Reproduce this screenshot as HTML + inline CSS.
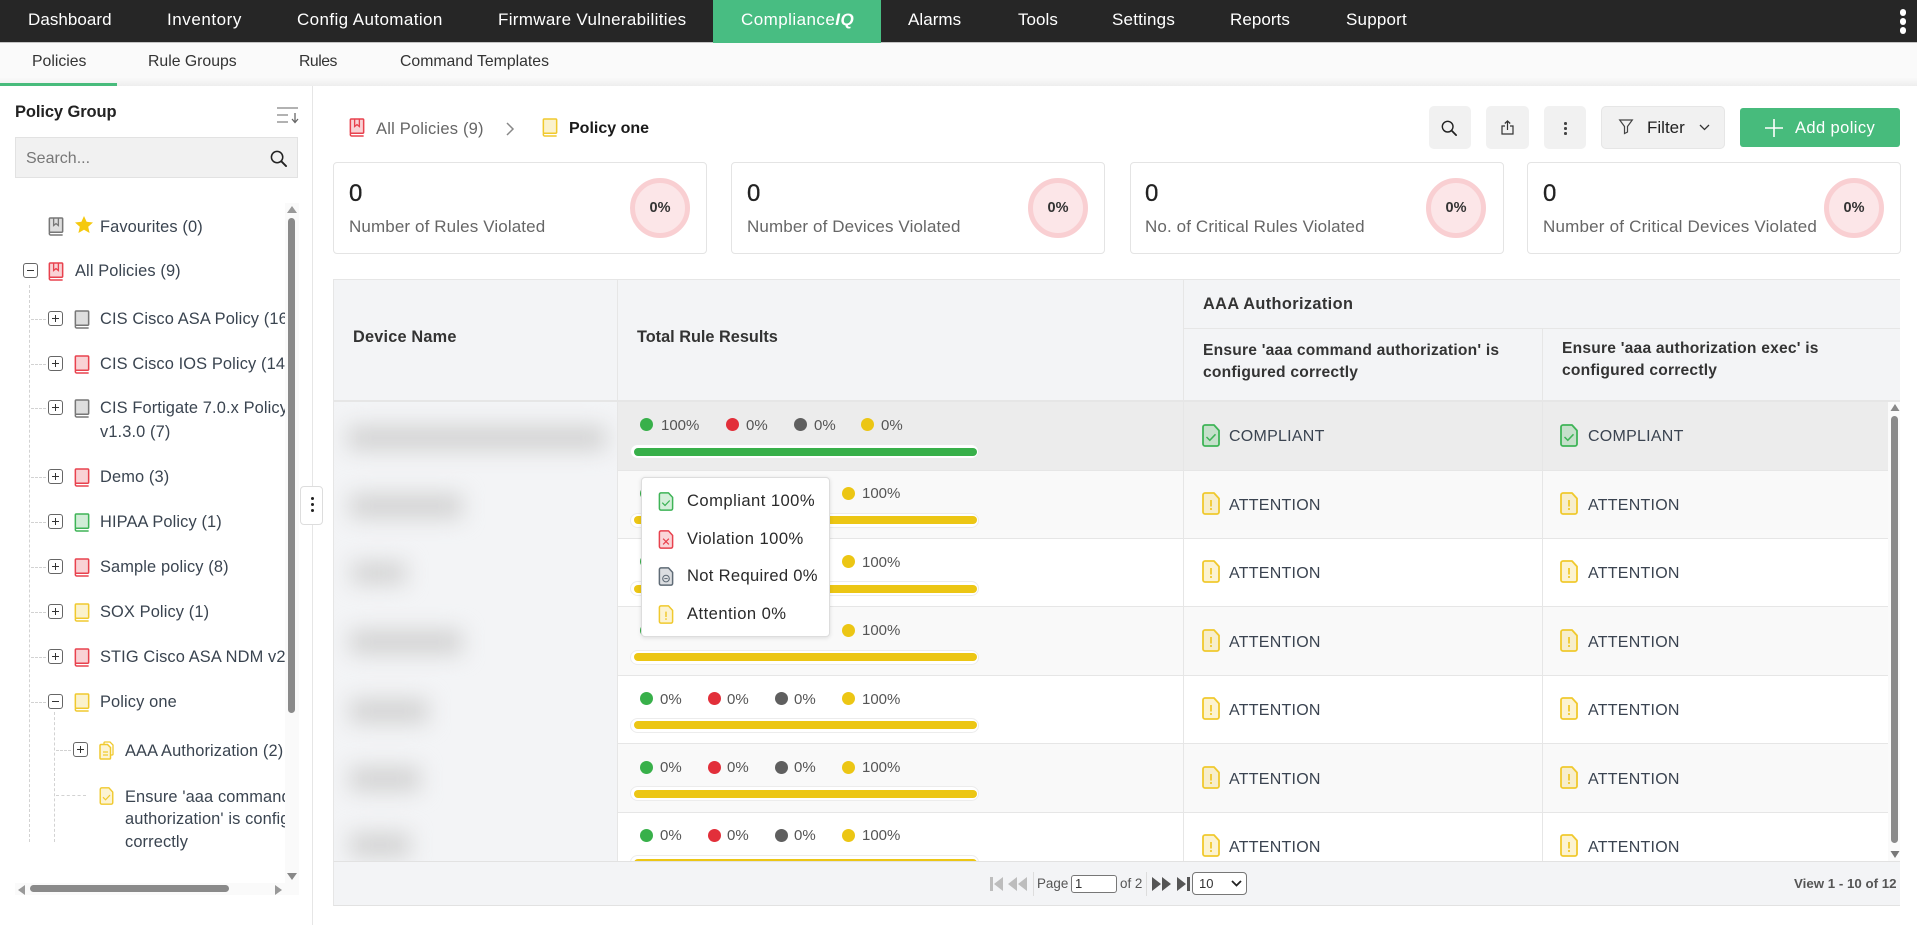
<!DOCTYPE html>
<html lang="en"><head><meta charset="utf-8"><title>Compliance IQ</title>
<style>
html,body{margin:0;padding:0;background:#fff}
body{width:1917px;height:925px;overflow:hidden;position:relative;font-family:"Liberation Sans",sans-serif;color:#333}
.a{position:absolute}
.t{position:absolute;white-space:nowrap;line-height:20px;height:20px}
svg.i{position:absolute;overflow:visible}
.nav{font-size:17px;color:#fff;letter-spacing:.05px}
.sub{font-size:15.8px;color:#333}
.tree{font-size:16.4px;color:#3a4450;letter-spacing:.12px}
.lbl{font-size:17px;color:#666;letter-spacing:.12px}
.num{font-size:24px;color:#222;line-height:30px;height:30px;-webkit-text-stroke:.3px #222}
.ring{position:absolute;width:50px;height:50px;border:5px solid #f9cfd2;background:#fce6e8;border-radius:50%;top:178px;text-align:center;line-height:50px;font-size:14.5px;font-weight:bold;color:#333}
.card{position:absolute;top:162px;height:90px;width:372px;border:1px solid #e4e4e4;border-radius:4px;background:#fff}
.th{font-size:16.3px;font-weight:bold;color:#333}
.th2{font-size:15.6px;font-weight:bold;color:#333;letter-spacing:.22px}
.dot{position:absolute;width:13px;height:13px;border-radius:50%}
.g{background:#38b04a}.r{background:#e22f3a}.k{background:#5f5f5f}.y{background:#ecc614}
.p{font-size:15px;color:#555}
.st{font-size:16px;color:#3a4350;letter-spacing:.25px}
.track{position:absolute;left:630px;width:349px;height:15px;background:#fff;border:1px solid #ececec;box-sizing:border-box;border-radius:8px}
.fill{position:absolute;left:634px;width:343px;height:8px;border-radius:4px}
.b{position:absolute;background:#d2d2d2;filter:blur(11px)}
.btn{position:absolute;top:106px;height:43px;background:#f1f1f1;border-radius:5px}
.pop{font-size:16.6px;color:#2a2a2a;letter-spacing:.45px}
.f{font-size:13.4px;color:#555}
.line{position:absolute;background:#e6e6e6}
.dh{position:absolute;height:0;border-top:1px dashed #d2d2d2}
.dv{position:absolute;width:0;border-left:1px dashed #d2d2d2}
.box{position:absolute;width:13px;height:13px;border:1px solid #666;border-radius:3px;background:#fff;box-sizing:content-box}
.box:before{content:"";position:absolute;left:3px;right:3px;top:5.75px;height:1.5px;background:#333}
.box.pl:after{content:"";position:absolute;top:3px;bottom:3px;left:5.75px;width:1.5px;background:#333}
</style></head><body>

<svg width="0" height="0" style="position:absolute">
<defs>
<symbol id="book" viewBox="0 0 16 20" overflow="visible"><rect x="1" y="1" width="14" height="15" rx="1" fill="currentColor" fill-opacity=".24" stroke="currentColor" stroke-width="1.6"/><path d="M1 16v1.500A1.500 1.500 0 0 0 2.500 19H15" fill="none" stroke="currentColor" stroke-width="1.6"/></symbol>
<symbol id="bookm" viewBox="0 0 16 20" overflow="visible"><rect x="1" y="1" width="14" height="15" rx="1" fill="currentColor" fill-opacity=".24" stroke="currentColor" stroke-width="1.6"/><path d="M1 16v1.500A1.500 1.500 0 0 0 2.500 19H15" fill="none" stroke="currentColor" stroke-width="1.6"/><path d="M5.500 1v8l2.500-2 2.500 2V1" fill="none" stroke="currentColor" stroke-width="1.4"/></symbol>
<symbol id="doc" viewBox="0 0 18 23" overflow="visible"><path d="M3 1h9l5 5.500V20a2 2 0 0 1-2 2H3a2 2 0 0 1-2-2V3a2 2 0 0 1 2-2z" fill="currentColor" fill-opacity=".22" stroke="currentColor" stroke-width="1.8" stroke-linejoin="round"/></symbol>
<symbol id="dchk" viewBox="0 0 18 23" overflow="visible"><use href="#doc" width="18" height="23"/><path d="M4.500 13l3.300 3.300 5.700-6" fill="none" stroke="currentColor" stroke-width="1.500"/></symbol>
<symbol id="dx" viewBox="0 0 18 23" overflow="visible"><use href="#doc" width="18" height="23"/><path d="M5.500 10.500l7 7m0-7l-7 7" fill="none" stroke="currentColor" stroke-width="1.500"/></symbol>
<symbol id="dmin" viewBox="0 0 18 23" overflow="visible"><use href="#doc" width="18" height="23"/><circle cx="9" cy="14" r="4" fill="none" stroke="currentColor" stroke-width="1.300"/><path d="M7 14h4" stroke="currentColor" stroke-width="1.200"/></symbol>
<symbol id="dex" viewBox="0 0 18 23" overflow="visible"><use href="#doc" width="18" height="23"/><path d="M9 8v6.500M9 16v2" fill="none" stroke="currentColor" stroke-width="1.800"/></symbol>
<symbol id="find" viewBox="0 0 18 18" overflow="visible"><circle cx="7.500" cy="7.500" r="6" fill="none" stroke="currentColor" stroke-width="1.600"/><path d="M12 12l5 5" stroke="currentColor" stroke-width="2" stroke-linecap="round"/></symbol>
</defs>
</svg>

<!-- top nav -->
<div class="a" style="left:0;top:0;width:1917px;height:42px;background:#262626"></div>
<div class="a" style="left:0;top:42px;width:1917px;height:1px;background:#c4c4c4"></div>
<div class="a" style="left:713px;top:0;width:168px;height:43px;background:#48bd82"></div>
<div class="t nav" style="left:28px;top:10px">Dashboard</div>
<div class="t nav" style="left:167px;top:10px;letter-spacing:.55px">Inventory</div>
<div class="t nav" style="left:297px;top:10px;letter-spacing:.4px">Config Automation</div>
<div class="t nav" style="left:498px;top:10px;letter-spacing:.32px">Firmware Vulnerabilities</div>
<div class="t nav" style="left:741px;top:10px;letter-spacing:.45px">Compliance<b><i>IQ</i></b></div>
<div class="t nav" style="left:908px;top:10px">Alarms</div>
<div class="t nav" style="left:1018px;top:10px">Tools</div>
<div class="t nav" style="left:1112px;top:10px;letter-spacing:.2px">Settings</div>
<div class="t nav" style="left:1230px;top:10px">Reports</div>
<div class="t nav" style="left:1346px;top:10px;letter-spacing:.2px">Support</div>
<div class="a" style="left:1900px;top:9px;width:6px;height:7px;border-radius:3px;background:#fff"></div>
<div class="a" style="left:1900px;top:18px;width:6px;height:7px;border-radius:3px;background:#fff"></div>
<div class="a" style="left:1900px;top:27px;width:6px;height:7px;border-radius:3px;background:#fff"></div>

<!-- sub nav -->
<div class="a" style="left:0;top:43px;width:1917px;height:43px;background:linear-gradient(#fafafa 80%,#eeeeee)"></div>
<div class="a" style="left:0;top:83px;width:117px;height:3px;background:#48bb7c"></div>
<div class="t sub" style="left:32px;top:52px">Policies</div>
<div class="t sub" style="left:148px;top:52px">Rule Groups</div>
<div class="t sub" style="left:299px;top:52px;letter-spacing:-.5px">Rules</div>
<div class="t sub" style="left:400px;top:52px">Command Templates</div>

<!-- sidebar -->
<div class="line" style="left:312px;top:86px;width:1px;height:839px"></div>
<div class="t" style="left:15px;top:102px;font-size:16.500px;font-weight:bold;color:#222;letter-spacing:-.1px">Policy Group</div>
<svg class="i" style="left:277px;top:107px" width="22" height="16" viewBox="0 0 22 16"><path d="M0 1h21M0 8h11M0 15h11" stroke="#999" stroke-width="1.400" fill="none"/><path d="M18 6v9M15 12l3 3.500 3-3.500" stroke="#666" stroke-width="1.300" fill="none"/></svg>
<div class="a" style="left:15px;top:137px;width:283px;height:41px;box-sizing:border-box;background:#f1f1f1;border:1px solid #e2e2e2"></div>
<div class="t" style="left:26px;top:149px;font-size:16px;color:#777">Search...</div>
<svg class="i" style="left:270px;top:150px;color:#222" width="17" height="17"><use href="#find" width="17" height="17"/></svg>

<div class="a" style="left:285px;top:203px;width:14px;height:692px;background:#fafafa"></div>
<div class="a" style="left:288px;top:218px;width:7px;height:495px;background:#8a8a8a;border-radius:4px"></div>
<svg class="i" style="left:286px;top:205px" width="12" height="9"><path d="M6 1l5 7H1z" fill="#999"/></svg>
<svg class="i" style="left:286px;top:872px" width="12" height="9"><path d="M6 8l5-7H1z" fill="#888"/></svg>
<div class="a" style="left:15px;top:883px;width:283px;height:12px;background:#fafafa"></div>
<div class="a" style="left:30px;top:885px;width:199px;height:7px;background:#8a8a8a;border-radius:4px"></div>
<svg class="i" style="left:17px;top:885px" width="9" height="10"><path d="M1 5l7-5v10z" fill="#999"/></svg>
<svg class="i" style="left:274px;top:885px" width="9" height="10"><path d="M8 5L1 0v10z" fill="#999"/></svg>

<div class="dv" style="left:29px;top:285px;height:557px"></div>
<div class="dv" style="left:54px;top:712px;height:130px"></div>
<div class="dh" style="left:31px;top:319px;width:15px"></div>
<div class="dh" style="left:31px;top:364px;width:15px"></div>
<div class="dh" style="left:31px;top:408px;width:15px"></div>
<div class="dh" style="left:31px;top:477px;width:15px"></div>
<div class="dh" style="left:31px;top:522px;width:15px"></div>
<div class="dh" style="left:31px;top:567px;width:15px"></div>
<div class="dh" style="left:31px;top:612px;width:15px"></div>
<div class="dh" style="left:31px;top:657px;width:15px"></div>
<div class="dh" style="left:31px;top:702px;width:15px"></div>
<div class="dh" style="left:56px;top:750px;width:15px"></div>
<div class="dh" style="left:56px;top:795px;width:30px"></div>

<svg class="i" style="left:48px;top:217px;color:#777" width="16" height="19"><use href="#bookm" width="16" height="19"/></svg>
<svg class="i" style="left:75px;top:216px" width="18" height="17" viewBox="0 0 18 17"><path d="M9 0l2.600 5.800 6.400.700-4.800 4.200 1.400 6.300L9 13.700 3.400 17l1.400-6.300L0 6.500l6.400-.700z" fill="#f5c90f"/></svg>
<div class="t tree" style="left:100px;top:217px">Favourites (0)</div>

<div class="box" style="left:23px;top:263px"></div>
<svg class="i" style="left:48px;top:262px;color:#e8424e" width="16" height="19"><use href="#bookm" width="16" height="19"/></svg>
<div class="t tree" style="left:75px;top:261px">All Policies (9)</div>

<div class="a" style="left:0;top:300px;width:285px;height:560px;overflow:hidden">
<div class="box pl" style="left:48px;top:11px"></div>
<svg class="i" style="left:74px;top:10px;color:#777" width="16" height="19"><use href="#book" width="16" height="19"/></svg>
<div class="t tree" style="left:100px;top:9px">CIS Cisco ASA Policy (16)</div>
<div class="box pl" style="left:48px;top:56px"></div>
<svg class="i" style="left:74px;top:55px;color:#e8424e" width="16" height="19"><use href="#book" width="16" height="19"/></svg>
<div class="t tree" style="left:100px;top:54px">CIS Cisco IOS Policy (14)</div>
<div class="box pl" style="left:48px;top:100px"></div>
<svg class="i" style="left:74px;top:99px;color:#777" width="16" height="19"><use href="#book" width="16" height="19"/></svg>
<div class="t tree" style="left:100px;top:98px">CIS Fortigate 7.0.x Policy</div>
<div class="t tree" style="left:100px;top:122px">v1.3.0 (7)</div>
<div class="box pl" style="left:48px;top:169px"></div>
<svg class="i" style="left:74px;top:168px;color:#e8424e" width="16" height="19"><use href="#book" width="16" height="19"/></svg>
<div class="t tree" style="left:100px;top:167px">Demo (3)</div>
<div class="box pl" style="left:48px;top:214px"></div>
<svg class="i" style="left:74px;top:213px;color:#3fb457" width="16" height="19"><use href="#book" width="16" height="19"/></svg>
<div class="t tree" style="left:100px;top:212px">HIPAA Policy (1)</div>
<div class="box pl" style="left:48px;top:259px"></div>
<svg class="i" style="left:74px;top:258px;color:#e8424e" width="16" height="19"><use href="#book" width="16" height="19"/></svg>
<div class="t tree" style="left:100px;top:257px">Sample policy (8)</div>
<div class="box pl" style="left:48px;top:304px"></div>
<svg class="i" style="left:74px;top:303px;color:#f0c92e" width="16" height="19"><use href="#book" width="16" height="19"/></svg>
<div class="t tree" style="left:100px;top:302px">SOX Policy (1)</div>
<div class="box pl" style="left:48px;top:349px"></div>
<svg class="i" style="left:74px;top:348px;color:#e8424e" width="16" height="19"><use href="#book" width="16" height="19"/></svg>
<div class="t tree" style="left:100px;top:347px">STIG Cisco ASA NDM v2R1</div>
<div class="box" style="left:48px;top:394px"></div>
<svg class="i" style="left:74px;top:393px;color:#f0c92e" width="16" height="19"><use href="#book" width="16" height="19"/></svg>
<div class="t tree" style="left:100px;top:392px">Policy one</div>
<div class="box pl" style="left:73px;top:442px"></div>
<svg class="i" style="left:99px;top:441px;color:#f0c92e" width="15" height="19" viewBox="0 0 15 19"><path d="M5 3V2a1 1 0 0 1 1-1h5l3 3v9a1 1 0 0 1-1 1h-1" fill="none" stroke="currentColor" stroke-width="1.300"/><path d="M2 3.500h6.500l3 3V17a1 1 0 0 1-1 1H2a1 1 0 0 1-1-1V4.500a1 1 0 0 1 1-1z" fill="currentColor" fill-opacity=".2" stroke="currentColor" stroke-width="1.500"/><path d="M4 11h5M4 14h5" stroke="currentColor" stroke-width="1.200"/></svg>
<div class="t tree" style="left:125px;top:441px">AAA Authorization (2)</div>
<svg class="i" style="left:99px;top:487px;color:#f0c92e" width="15" height="18"><use href="#dchk" width="15" height="18"/></svg>
<div class="t tree" style="left:125px;top:487px">Ensure 'aaa command</div>
<div class="t tree" style="left:125px;top:509px">authorization' is configured</div>
<div class="t tree" style="left:125px;top:532px">correctly</div>
</div>

<div class="a" style="left:300px;top:486px;width:23px;height:39px;box-sizing:border-box;background:#fff;border:1px solid #ddd;border-radius:4px"></div>
<div class="a" style="left:311px;top:497px;width:3px;height:3px;border-radius:50%;background:#222"></div>
<div class="a" style="left:311px;top:503px;width:3px;height:3px;border-radius:50%;background:#222"></div>
<div class="a" style="left:311px;top:509px;width:3px;height:3px;border-radius:50%;background:#222"></div>

<!-- breadcrumb -->
<svg class="i" style="left:349px;top:118px;color:#e8424e" width="16" height="19"><use href="#bookm" width="16" height="19"/></svg>
<div class="t" style="left:376px;top:119px;font-size:16.500px;color:#666;letter-spacing:.2px">All Policies (9)</div>
<svg class="i" style="left:506px;top:122px" width="9" height="14"><path d="M1 1l6 6-6 6" fill="none" stroke="#888" stroke-width="1.500"/></svg>
<svg class="i" style="left:542px;top:118px;color:#f0c92e" width="16" height="19"><use href="#book" width="16" height="19"/></svg>
<div class="t" style="left:569px;top:119px;font-size:16px;font-weight:bold;color:#1a1a1a">Policy one</div>

<!-- toolbar -->
<div class="btn" style="left:1429px;width:42px"></div>
<svg class="i" style="left:1441px;top:120px;color:#222" width="16" height="16"><use href="#find" width="16" height="16"/></svg>
<div class="btn" style="left:1486px;width:43px"></div>
<svg class="i" style="left:1501px;top:120px" width="13" height="15" viewBox="0 0 13 15"><path d="M4 6H1v8h11V6H9M6.500 10V1M3.800 3.500L6.500 1l2.700 2.500" fill="none" stroke="#333" stroke-width="1.200"/></svg>
<div class="btn" style="left:1544px;width:42px"></div>
<div class="a" style="left:1564px;top:122px;width:2.5px;height:2.500px;border-radius:50%;background:#444"></div>
<div class="a" style="left:1564px;top:127px;width:2.5px;height:2.500px;border-radius:50%;background:#444"></div>
<div class="a" style="left:1564px;top:132px;width:2.5px;height:2.500px;border-radius:50%;background:#444"></div>
<div class="btn" style="left:1601px;width:124px;box-shadow:0 0 0 1px #e6e6e6 inset"></div>
<svg class="i" style="left:1619px;top:119px" width="14" height="15" viewBox="0 0 14 15"><path d="M.700 1h12.600L8.500 7.500V13L5.500 14.500v-7z" fill="none" stroke="#444" stroke-width="1.200"/></svg>
<div class="t" style="left:1647px;top:118px;font-size:17px;color:#222">Filter</div>
<svg class="i" style="left:1699px;top:124px" width="11" height="7"><path d="M1 1l4.500 4.500L10 1" fill="none" stroke="#333" stroke-width="1.300"/></svg>
<div class="a" style="left:1740px;top:108px;width:160px;height:39px;background:#47bb7c;border-radius:3px"></div>
<svg class="i" style="left:1765px;top:119px" width="18" height="18"><path d="M9 0v18M0 9h18" stroke="#fff" stroke-width="1.600"/></svg>
<div class="t" style="left:1795px;top:118px;font-size:16.500px;color:#fff;letter-spacing:.4px">Add policy</div>

<!-- cards -->
<div class="card" style="left:333px"></div>
<div class="card" style="left:731px"></div>
<div class="card" style="left:1130px"></div>
<div class="card" style="left:1527px"></div>
<div class="t num" style="left:349px;top:179px">0</div>
<div class="t num" style="left:747px;top:179px">0</div>
<div class="t num" style="left:1145px;top:179px">0</div>
<div class="t num" style="left:1543px;top:179px">0</div>
<div class="t lbl" style="left:349px;top:217px">Number of Rules Violated</div>
<div class="t lbl" style="left:747px;top:217px">Number of Devices Violated</div>
<div class="t lbl" style="left:1145px;top:217px">No. of Critical Rules Violated</div>
<div class="t lbl" style="left:1543px;top:217px;letter-spacing:.2px">Number of Critical Devices Violated</div>
<div class="ring" style="left:630px">0%</div>
<div class="ring" style="left:1028px">0%</div>
<div class="ring" style="left:1426px">0%</div>
<div class="ring" style="left:1824px">0%</div>

<!-- table header -->
<div class="a" style="left:333px;top:279px;width:1567px;height:122px;background:#f3f4f6"></div>
<div class="line" style="left:333px;top:279px;width:1567px;height:1px"></div>
<div class="line" style="left:333px;top:279px;width:1px;height:626px"></div>
<div class="line" style="left:1183px;top:328px;width:717px;height:1px"></div>
<div class="line" style="left:333px;top:400px;width:1567px;height:2px"></div>
<div class="t th" style="left:353px;top:327px;letter-spacing:.2px">Device Name</div>
<div class="t th" style="left:637px;top:327px">Total Rule Results</div>
<div class="t th" style="left:1203px;top:294px;letter-spacing:.4px">AAA Authorization</div>
<div class="t th2" style="left:1203px;top:341px">Ensure 'aaa command authorization' is</div>
<div class="t th2" style="left:1203px;top:363px">configured correctly</div>
<div class="t th2" style="left:1562px;top:339px">Ensure 'aaa authorization exec' is</div>
<div class="t th2" style="left:1562px;top:361px">configured correctly</div>

<!-- rows bg -->
<div class="a" style="left:617px;top:402px;width:1271px;height:68px;background:#ececec"></div>
<div class="a" style="left:617px;top:471px;width:1271px;height:67px;background:#f9f9f9"></div>
<div class="a" style="left:617px;top:607px;width:1271px;height:68px;background:#f9f9f9"></div>
<div class="a" style="left:617px;top:744px;width:1271px;height:69px;background:#f9f9f9"></div>
<div class="line" style="left:617px;top:470px;width:1271px;height:1px"></div>
<div class="line" style="left:617px;top:538px;width:1271px;height:1px"></div>
<div class="line" style="left:617px;top:606px;width:1271px;height:1px"></div>
<div class="line" style="left:617px;top:675px;width:1271px;height:1px"></div>
<div class="line" style="left:617px;top:743px;width:1271px;height:1px"></div>
<div class="line" style="left:617px;top:812px;width:1271px;height:1px"></div>

<!-- device col -->
<div class="a" style="left:334px;top:402px;width:283px;height:460px;background:#f3f4f6;overflow:hidden">
 <div class="b" style="left:14px;top:24px;width:258px;height:24px"></div>
 <div class="b" style="left:16px;top:92px;width:112px;height:24px"></div>
 <div class="b" style="left:18px;top:160px;width:54px;height:22px"></div>
 <div class="b" style="left:16px;top:228px;width:112px;height:24px"></div>
 <div class="b" style="left:16px;top:297px;width:78px;height:24px"></div>
 <div class="b" style="left:16px;top:365px;width:70px;height:24px"></div>
 <div class="b" style="left:16px;top:431px;width:60px;height:24px"></div>
</div>
<div class="line" style="left:617px;top:279px;width:1px;height:583px"></div>
<div class="line" style="left:1183px;top:279px;width:1px;height:583px"></div>
<div class="line" style="left:1542px;top:329px;width:1px;height:533px"></div>

<!-- rule results -->
<div class="dot g" style="left:640px;top:418px"></div><div class="t p" style="left:661px;top:416px">100%</div>
<div class="dot r" style="left:726px;top:418px"></div><div class="t p" style="left:746px;top:416px">0%</div>
<div class="dot k" style="left:794px;top:418px"></div><div class="t p" style="left:814px;top:416px">0%</div>
<div class="dot y" style="left:861px;top:418px"></div><div class="t p" style="left:881px;top:416px">0%</div>
<div class="track" style="top:444px"></div><div class="fill g" style="top:448px"></div>

<div class="dot g" style="left:640px;top:487px"></div><div class="dot y" style="left:842px;top:487px"></div><div class="t p" style="left:862px;top:484px">100%</div>
<div class="track" style="top:513px"></div><div class="fill y" style="top:516px"></div>
<div class="dot g" style="left:640px;top:555px"></div><div class="dot y" style="left:842px;top:555px"></div><div class="t p" style="left:862px;top:553px">100%</div>
<div class="track" style="top:581px"></div><div class="fill y" style="top:585px"></div>
<div class="dot g" style="left:640px;top:624px"></div><div class="dot y" style="left:842px;top:624px"></div><div class="t p" style="left:862px;top:621px">100%</div>
<div class="track" style="top:650px"></div><div class="fill y" style="top:653px"></div>

<div class="dot g" style="left:640px;top:692px"></div><div class="t p" style="left:660px;top:690px">0%</div>
<div class="dot r" style="left:708px;top:692px"></div><div class="t p" style="left:727px;top:690px">0%</div>
<div class="dot k" style="left:775px;top:692px"></div><div class="t p" style="left:794px;top:690px">0%</div>
<div class="dot y" style="left:842px;top:692px"></div><div class="t p" style="left:862px;top:690px">100%</div>
<div class="track" style="top:718px"></div><div class="fill y" style="top:721px"></div>

<div class="dot g" style="left:640px;top:761px"></div><div class="t p" style="left:660px;top:758px">0%</div>
<div class="dot r" style="left:708px;top:761px"></div><div class="t p" style="left:727px;top:758px">0%</div>
<div class="dot k" style="left:775px;top:761px"></div><div class="t p" style="left:794px;top:758px">0%</div>
<div class="dot y" style="left:842px;top:761px"></div><div class="t p" style="left:862px;top:758px">100%</div>
<div class="track" style="top:786px"></div><div class="fill y" style="top:790px"></div>

<div class="dot g" style="left:640px;top:829px"></div><div class="t p" style="left:660px;top:826px">0%</div>
<div class="dot r" style="left:708px;top:829px"></div><div class="t p" style="left:727px;top:826px">0%</div>
<div class="dot k" style="left:775px;top:829px"></div><div class="t p" style="left:794px;top:826px">0%</div>
<div class="dot y" style="left:842px;top:829px"></div><div class="t p" style="left:862px;top:826px">100%</div>
<div class="track" style="top:855px"></div><div class="fill y" style="top:859px"></div>

<!-- status cells -->
<svg class="i" style="left:1202px;top:424px;color:#3fb457" width="18" height="23"><use href="#dchk" width="18" height="23"/></svg><div class="t st" style="left:1229px;top:427px">COMPLIANT</div>
<svg class="i" style="left:1560px;top:424px;color:#3fb457" width="18" height="23"><use href="#dchk" width="18" height="23"/></svg><div class="t st" style="left:1588px;top:427px">COMPLIANT</div>
<svg class="i" style="left:1202px;top:492px;color:#f0c92e" width="18" height="23"><use href="#dex" width="18" height="23"/></svg><div class="t st" style="left:1229px;top:496px">ATTENTION</div>
<svg class="i" style="left:1560px;top:492px;color:#f0c92e" width="18" height="23"><use href="#dex" width="18" height="23"/></svg><div class="t st" style="left:1588px;top:496px">ATTENTION</div>
<svg class="i" style="left:1202px;top:560px;color:#f0c92e" width="18" height="23"><use href="#dex" width="18" height="23"/></svg><div class="t st" style="left:1229px;top:564px">ATTENTION</div>
<svg class="i" style="left:1560px;top:560px;color:#f0c92e" width="18" height="23"><use href="#dex" width="18" height="23"/></svg><div class="t st" style="left:1588px;top:564px">ATTENTION</div>
<svg class="i" style="left:1202px;top:629px;color:#f0c92e" width="18" height="23"><use href="#dex" width="18" height="23"/></svg><div class="t st" style="left:1229px;top:633px">ATTENTION</div>
<svg class="i" style="left:1560px;top:629px;color:#f0c92e" width="18" height="23"><use href="#dex" width="18" height="23"/></svg><div class="t st" style="left:1588px;top:633px">ATTENTION</div>
<svg class="i" style="left:1202px;top:697px;color:#f0c92e" width="18" height="23"><use href="#dex" width="18" height="23"/></svg><div class="t st" style="left:1229px;top:701px">ATTENTION</div>
<svg class="i" style="left:1560px;top:697px;color:#f0c92e" width="18" height="23"><use href="#dex" width="18" height="23"/></svg><div class="t st" style="left:1588px;top:701px">ATTENTION</div>
<svg class="i" style="left:1202px;top:766px;color:#f0c92e" width="18" height="23"><use href="#dex" width="18" height="23"/></svg><div class="t st" style="left:1229px;top:770px">ATTENTION</div>
<svg class="i" style="left:1560px;top:766px;color:#f0c92e" width="18" height="23"><use href="#dex" width="18" height="23"/></svg><div class="t st" style="left:1588px;top:770px">ATTENTION</div>
<svg class="i" style="left:1202px;top:834px;color:#f0c92e" width="18" height="23"><use href="#dex" width="18" height="23"/></svg><div class="t st" style="left:1229px;top:838px">ATTENTION</div>
<svg class="i" style="left:1560px;top:834px;color:#f0c92e" width="18" height="23"><use href="#dex" width="18" height="23"/></svg><div class="t st" style="left:1588px;top:838px">ATTENTION</div>

<!-- popover -->
<div class="a" style="left:641px;top:477px;width:189px;height:160px;box-sizing:border-box;background:#fff;border:1px solid #ddd;border-radius:4px;box-shadow:0 1px 4px rgba(0,0,0,.12)"></div>
<svg class="i" style="left:658px;top:492px;color:#3fb457" width="16" height="19"><use href="#dchk" width="16" height="19"/></svg><div class="t pop" style="left:687px;top:491px">Compliant 100%</div>
<svg class="i" style="left:658px;top:530px;color:#e8424e" width="16" height="19"><use href="#dx" width="16" height="19"/></svg><div class="t pop" style="left:687px;top:529px">Violation 100%</div>
<svg class="i" style="left:658px;top:567px;color:#5f6b76" width="16" height="19"><use href="#dmin" width="16" height="19"/></svg><div class="t pop" style="left:687px;top:566px;letter-spacing:.3px">Not Required 0%</div>
<svg class="i" style="left:658px;top:605px;color:#f0c92e" width="16" height="19"><use href="#dex" width="16" height="19"/></svg><div class="t pop" style="left:687px;top:604px">Attention 0%</div>

<!-- table scrollbar -->
<div class="a" style="left:1888px;top:402px;width:12px;height:460px;background:#fafafa"></div>
<div class="a" style="left:1891px;top:416px;width:7px;height:427px;background:#8a8a8a;border-radius:4px"></div>
<svg class="i" style="left:1890px;top:404px" width="10" height="8"><path d="M5 0l4.500 7H.500z" fill="#888"/></svg>
<svg class="i" style="left:1890px;top:851px" width="10" height="8"><path d="M5 7l4.500-7H.500z" fill="#777"/></svg>

<!-- footer -->
<div class="a" style="left:333px;top:861px;width:1567px;height:45px;box-sizing:border-box;background:#f3f4f6;border-top:1px solid #e2e2e2;border-bottom:1px solid #e2e2e2;border-left:1px solid #e6e6e6"></div>
<svg class="i" style="left:990px;top:877px" width="37" height="14" viewBox="0 0 37 14"><path d="M0 0h3v14H0zM13 0v14L4 7zM27 0v14L18 7zM37 0v14L28 7z" fill="#bdbdbd"/></svg>
<div class="line" style="left:1033px;top:872px;width:1px;height:24px;background:#ddd"></div>
<div class="t f" style="left:1037px;top:874px">Page</div>
<div class="a" style="left:1071px;top:875px;width:46px;height:18px;box-sizing:border-box;background:#fff;border:1px solid #777;border-radius:3px;font-size:13px;line-height:16px;padding-left:3px;color:#333">1</div>
<div class="t f" style="left:1120px;top:874px">of 2</div>
<div class="line" style="left:1146px;top:872px;width:1px;height:24px;background:#ddd"></div>
<svg class="i" style="left:1152px;top:877px" width="38" height="14" viewBox="0 0 38 14"><path d="M0 0v14l9-7zM10 0v14l9-7zM25 0v14l9-7zM35 0h3v14h-3z" fill="#555"/></svg>
<div class="a" style="left:1192px;top:872px;width:55px;height:23px;box-sizing:border-box;background:#fff;border:1px solid #777;border-radius:4px;font-size:13px;line-height:21px;padding-left:6px;color:#333">10</div>
<svg class="i" style="left:1231px;top:880px" width="11" height="7"><path d="M1 1l4.500 4.500L10 1" fill="none" stroke="#222" stroke-width="1.800"/></svg>
<div class="t f" style="left:1794px;top:874px;font-weight:bold;font-size:13.300px">View 1 - 10 of 12</div>

</body></html>
